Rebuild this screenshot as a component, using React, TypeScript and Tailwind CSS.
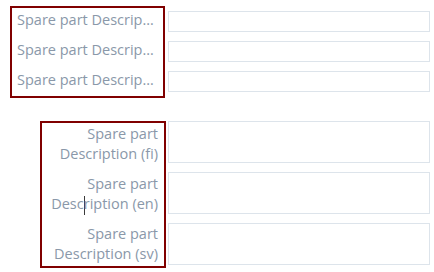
import React from "react";

const shortLabels = [
  "Spare part Description (fi)",
  "Spare part Description (en)",
  "Spare part Description (sv)",
];

function Field({ tall }: { tall?: boolean }) {
  return (
    <input
      type="text"
      readOnly
      className={`w-[262px] ${tall ? "h-[42px]" : "h-[21px]"} border border-[#dde4eb] bg-white outline-none`}
    />
  );
}

export default function App() {
  return (
    <div className="w-[434px] h-[272px] overflow-hidden bg-white font-['Open_Sans',sans-serif] text-[14.5px] text-[#8a98a9]">
      {/* single-line labels */}
      <div className="flex items-start">
        <div className="ml-[10px] mt-[6px] w-[155px] border-2 border-[#800000] pl-[5px] pr-[6px] pb-[4px] flex flex-col gap-[6px]">
          {shortLabels.map((l) => (
            <div key={l} className="h-[24px] leading-[24px] truncate">
              {l}
            </div>
          ))}
        </div>
        <div className="ml-[3px] mt-[11px] flex flex-col gap-[9px]">
          <Field />
          <Field />
          <Field />
        </div>
      </div>

      {/* wrapped labels */}
      <div className="mt-[23px] flex items-start">
        <div className="ml-[40px] w-[126px] border-2 border-[#800000] pt-[1px] pb-[2px] pr-[6px] flex flex-col gap-[10px] text-right">
          <div className="h-[40px] leading-[20px]">Spare part Description (fi)</div>
          <div className="h-[40px] leading-[20px]">
            Spare part{" "}
            <span className="whitespace-nowrap">
              Desc
              <span className="inline-block w-px h-[19px] bg-[#3a3a3a] align-middle -mr-px" />
              ription
            </span>{" "}
            (en)
          </div>
          <div className="h-[40px] leading-[20px]">Spare part Description (sv)</div>
        </div>
        <div className="ml-[2px] flex flex-col gap-[9px]">
          <Field tall />
          <Field tall />
          <Field tall />
        </div>
      </div>
    </div>
  );
}
